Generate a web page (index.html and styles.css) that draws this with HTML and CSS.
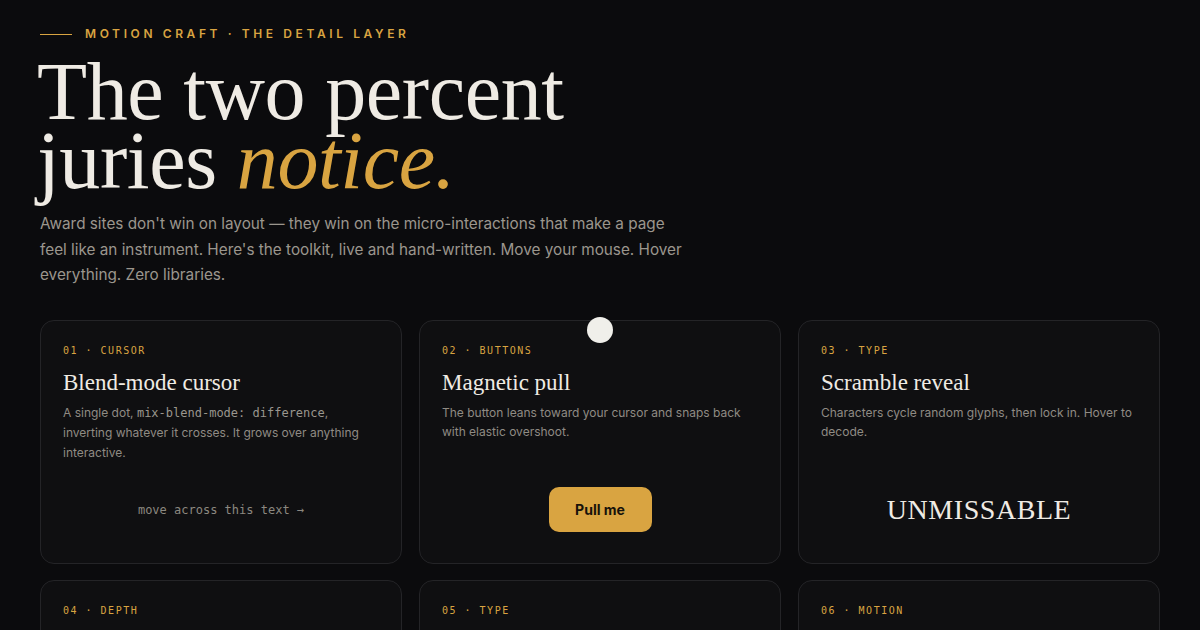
FILE: index.html
```html
<!DOCTYPE html>
<html lang="en">
<head>
<meta charset="utf-8">
<title>Motion Craft</title>
<link rel="stylesheet" href="styles.css">
</head>
<body>
<main class="page">
  <header class="hero">
    <div class="eyebrow"><span class="eyebrow-line"></span><span>Motion Craft · The Detail Layer</span></div>
    <h1 class="headline">The two percent<br>juries <em>notice.</em></h1>
    <p class="lede">Award sites don't win on layout — they win on the micro-interactions that make a page feel like an instrument. Here's the toolkit, live and hand-written. Move your mouse. Hover everything. Zero libraries.</p>
  </header>
  <section class="grid">
    <article class="card">
      <div class="label">01 · Cursor</div>
      <h2 class="title">Blend-mode cursor</h2>
      <p class="desc">A single dot, <code>mix-blend-mode: difference</code>, inverting whatever it crosses. It grows over anything interactive.</p>
      <div class="demo"><span class="mono-demo">move across this text →</span></div>
    </article>
    <article class="card">
      <div class="label">02 · Buttons</div>
      <h2 class="title">Magnetic pull</h2>
      <p class="desc">The button leans toward your cursor and snaps back with elastic overshoot.</p>
      <div class="demo"><button class="pull">Pull me</button></div>
    </article>
    <article class="card">
      <div class="label">03 · Type</div>
      <h2 class="title">Scramble reveal</h2>
      <p class="desc">Characters cycle random glyphs, then lock in. Hover to decode.</p>
      <div class="demo"><span class="scramble">UNMISSABLE</span></div>
    </article>
    <article class="card">
      <div class="label">04 · Depth</div>
      <h2 class="title">Tilt &amp; glare</h2>
      <p class="desc">Perspective tilt follows the pointer with a soft specular highlight.</p>
      <div class="demo"></div>
    </article>
    <article class="card">
      <div class="label">05 · Type</div>
      <h2 class="title">Split reveal</h2>
      <p class="desc">Words rise from a mask, staggered letter by letter.</p>
      <div class="demo"></div>
    </article>
    <article class="card">
      <div class="label">06 · Motion</div>
      <h2 class="title">Scroll velocity</h2>
      <p class="desc">A marquee that skews with the speed of your scroll.</p>
      <div class="demo"></div>
    </article>
  </section>
  <div class="cursor-dot"></div>
</main>
</body>
</html>
```
FILE: styles.css
```css
* { box-sizing: border-box; }
html, body { margin: 0; padding: 0; }
body {
  background: #0b0b0d;
  color: #efebe4;
  font-family: Inter, "Noto Sans", sans-serif;
  overflow: hidden;
  height: 630px;
}
.page {
  position: relative;
  padding: 27px 40px 0;
}
.eyebrow {
  display: flex;
  align-items: center;
  gap: 13px;
  font-size: 12px;
  font-weight: 600;
  letter-spacing: 0.3em;
  text-transform: uppercase;
  color: #d9a441;
  line-height: 14px;
}
.eyebrow-line {
  display: block;
  width: 32px;
  height: 1px;
  background: #d9a441;
}
.headline {
  margin: 16px 0 0 -3px;
  font-family: "Liberation Serif", "DejaVu Serif", serif;
  font-weight: 400;
  font-size: 82px;
  line-height: 69px;
  letter-spacing: -0.005em;
  color: #efebe4;
}
.headline em {
  font-style: italic;
  color: #d9a441;
}
.lede {
  margin: 16px 0 0;
  max-width: 648px;
  font-size: 15.3px;
  line-height: 25.6px;
  color: #9b968d;
}
.grid {
  margin-top: 32px;
  display: grid;
  grid-template-columns: repeat(3, 1fr);
  gap: 16px 17px;
}
.card {
  display: flex;
  flex-direction: column;
  background: #0f0f11;
  border: 1px solid #242427;
  border-radius: 14px;
  padding: 23px 22px 13px;
  min-height: 244px;
}
.label {
  font-family: "DejaVu Sans Mono", "Liberation Mono", monospace;
  font-size: 10px;
  line-height: 14px;
  letter-spacing: 0.15em;
  text-transform: uppercase;
  color: #d9a441;
}
.title {
  margin: 12px 0 0;
  font-family: "Liberation Serif", "DejaVu Serif", serif;
  font-weight: 400;
  font-size: 23px;
  line-height: 26px;
  color: #efebe4;
}
.desc {
  margin: 7px 0 0;
  font-size: 12px;
  line-height: 19.5px;
  color: #8f8b84;
}
.desc code {
  font-family: "DejaVu Sans Mono", "Liberation Mono", monospace;
  font-size: 12px;
  color: #9a968e;
}
.demo {
  margin-top: auto;
  height: 80px;
  display: flex;
  align-items: center;
  justify-content: center;
}
.mono-demo {
  font-family: "DejaVu Sans Mono", "Liberation Mono", monospace;
  font-size: 12px;
  color: #8c8880;
}
.pull {
  width: 103px;
  height: 45px;
  border: none;
  border-radius: 10px;
  background: #d9a441;
  color: #17120a;
  font-family: Inter, "Noto Sans", sans-serif;
  font-size: 14px;
  font-weight: 700;
}
.scramble {
  font-family: "Liberation Serif", "DejaVu Serif", serif;
  font-size: 28px;
  letter-spacing: 0.02em;
  color: #efebe4;
}
.cursor-dot {
  position: absolute;
  left: 587px;
  top: 317px;
  width: 26px;
  height: 26px;
  border-radius: 50%;
  background: #f0efea;
}
```
